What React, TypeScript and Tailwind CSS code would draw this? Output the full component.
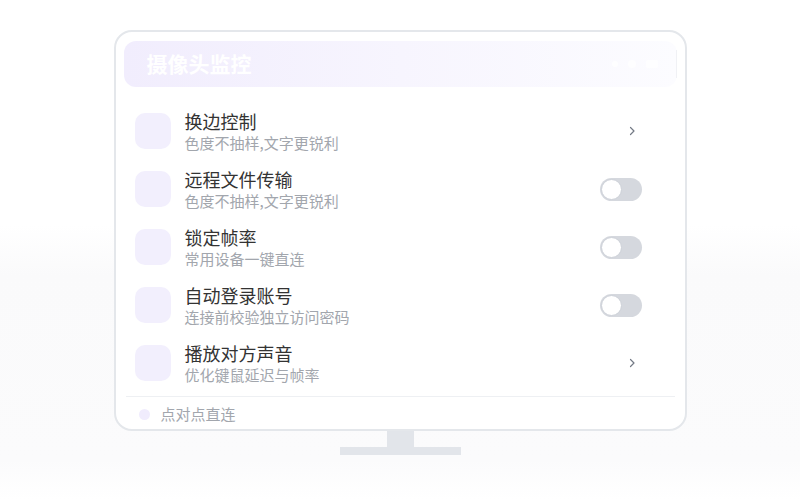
const rows = [
  { title: "换边控制", sub: "色度不抽样,文字更锐利", kind: "arrow" },
  { title: "远程文件传输", sub: "色度不抽样,文字更锐利", kind: "toggle" },
  { title: "锁定帧率", sub: "常用设备一键直连", kind: "toggle" },
  { title: "自动登录账号", sub: "连接前校验独立访问密码", kind: "toggle" },
  { title: "播放对方声音", sub: "优化键鼠延迟与帧率", kind: "arrow" },
]

function Toggle() {
  return (
    <div className="flex h-[23px] w-[42px] items-center rounded-full bg-[#d5d8de] p-[1px]">
      <div className="h-[21px] w-[21px] rounded-full border border-[#cdd1d8] bg-white" />
    </div>
  )
}

function Chevron() {
  return (
    <svg width="8" height="10" viewBox="0 0 8 10" className="mr-[6px]">
      <polyline
        points="2.5,1.5 6,5 2.5,8.5"
        fill="none"
        stroke="#737985"
        strokeWidth="1.2"
        strokeLinecap="round"
        strokeLinejoin="round"
      />
    </svg>
  )
}

export default function App() {
  return (
    <div
      className="flex h-[500px] w-[800px] flex-col items-center bg-[linear-gradient(to_bottom,#ffffff_0%,#ffffff_45%,#fafafb_55%,#fbfbfc_92%,#ffffff_100%)] pt-[30px]"
      style={{ fontFamily: '"Noto Sans CJK SC", "Noto Sans", sans-serif' }}
    >
      <div className="flex h-[401px] w-[573px] flex-col rounded-[18px] border-2 border-[#e4e7eb] bg-white px-2 pt-[9px]">
        <div className="flex h-[46px] items-center justify-between rounded-[12px] bg-gradient-to-r from-[#f1edfd] via-[#f7f5fe] to-[#fcfcff] pl-[23px]">
          <span className="-mt-[2px] text-[21px] font-bold leading-none text-white">摄像头监控</span>
          <div className="flex h-full items-center gap-[10px]">
            <div className="h-[6px] w-[6px] rounded-full bg-white/80" />
            <div className="h-[8px] w-[8px] rounded-full bg-white/80" />
            <div className="h-[8px] w-[12px] rounded-[2px] bg-white/80" />
            <div className="ml-[8px] h-[28px] w-px bg-[#f0f1f5]" />
          </div>
        </div>

        <div className="mt-[25px] flex flex-col gap-[14px] pl-[11px] pr-[35px]">
          {rows.map((row) => (
            <div key={row.title} className="flex h-[44px] items-start">
              <div className="mt-[1px] h-9 w-9 rounded-[10px] bg-[#f2effd]" />
              <div className="-mt-[2px] ml-[14px] flex-1">
                <p className="text-[18px] leading-[22px] text-[#333333]">{row.title}</p>
                <p className="text-[15px] leading-[22px] text-[#a2a6ad]">{row.sub}</p>
              </div>
              <div className="mt-[1px] flex h-9 items-center">
                {row.kind === "toggle" ? <Toggle /> : <Chevron />}
              </div>
            </div>
          ))}
        </div>

        <div className="mx-[2px] mt-[8px] h-px bg-[#eef0f3]" />

        <div className="mt-[6px] flex h-[22px] items-center pl-[15px]">
          <div className="h-[11px] w-[11px] rounded-full bg-[#f0ecfd]" />
          <span className="-mt-[1px] ml-[11px] text-[15px] leading-[22px] text-[#a2a6ad]">点对点直连</span>
        </div>
      </div>

      <div className="h-[16px] w-[27px] bg-[#e2e5ea]" />
      <div className="h-[8px] w-[121px] bg-[#e2e5ea]" />
    </div>
  )
}
